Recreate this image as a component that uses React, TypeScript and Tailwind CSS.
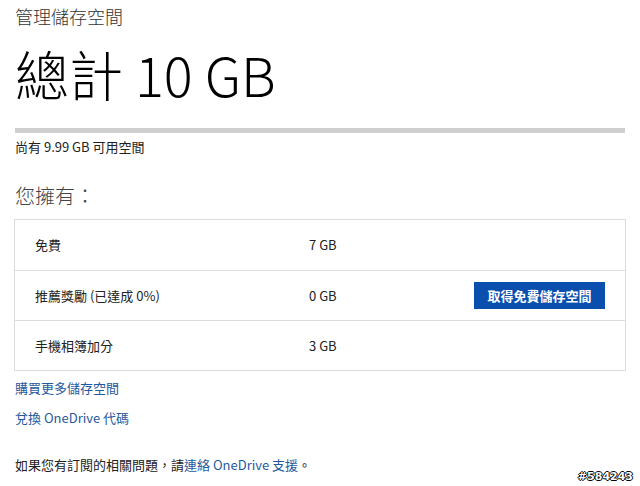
export default function App() {
  const rows = [
    { name: "免費", size: "7 GB", action: false },
    { name: "推薦獎勵 (已達成 0%)", size: "0 GB", action: true },
    { name: "手機相簿加分", size: "3 GB", action: false },
  ];

  return (
    <div
      className="relative w-[640px] h-[486px] bg-white text-[#222] overflow-hidden"
      style={{ fontFamily: '"Noto Sans CJK TC", "Noto Sans", sans-serif' }}
    >
      <div className="px-[15px] pt-[3px]">
        <div className="text-[18px] leading-[26px] text-[#333] font-light">管理儲存空間</div>
        <div className="mt-[13px] text-[54px] leading-[64px] font-light text-black">總計 10 GB</div>

        <div className="mt-[22px] h-[5px] w-[610px] bg-[#cfcfcf]" />
        <div className="mt-[4px] text-[13px] leading-[20px]">尚有 9.99 GB 可用空間</div>

        <div className="mt-[25px] text-[20px] leading-[28px] text-[#444] font-light">您擁有：</div>

        <div className="mt-[9px] w-[612px] -ml-px border border-[#dcdcdc]">
          {rows.map((r, i) => (
            <div
              key={r.name}
              className={`flex items-center h-[50px] ${i > 0 ? "border-t border-[#dcdcdc]" : ""}`}
            >
              <div className="w-[294px] pl-[20px] text-[13px]">{r.name}</div>
              <div className="flex-1 text-[13px]">{r.size}</div>
              {r.action && (
                <button className="mr-[20px] w-[131px] h-[27px] bg-[#0a4fae] text-white text-[13px] font-bold">
                  取得免費儲存空間
                </button>
              )}
            </div>
          ))}
        </div>

        <div className="mt-[7px] flex flex-col gap-[10px] text-[13px] leading-[20px] text-[#1f5a9e]">
          <a>購買更多儲存空間</a>
          <a>兌換 OneDrive 代碼</a>
        </div>

        <div className="mt-[27px] text-[13px] leading-[20px]">
          如果您有訂閱的相關問題，請<a className="text-[#1f5a9e]">連絡 OneDrive 支援</a>。
        </div>
      </div>

      <div
        className="absolute right-[7px] bottom-[1px] text-[11px] font-bold text-white"
        style={{
          fontFamily: '"DejaVu Sans", sans-serif',
          textShadow: "1px 0 #000, -1px 0 #000, 0 1px #000, 0 -1px #000",
        }}
      >
        #584243
      </div>
    </div>
  );
}
